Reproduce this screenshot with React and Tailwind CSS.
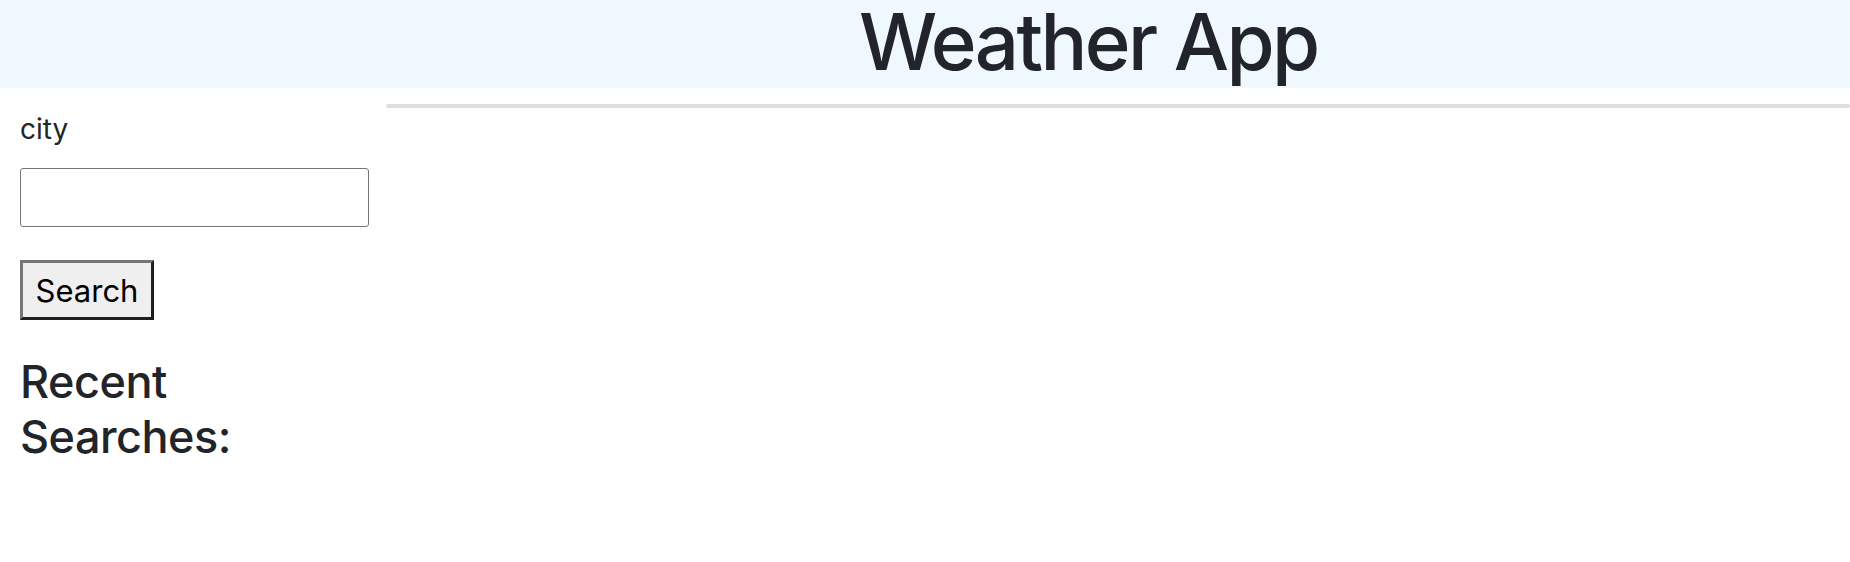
export default function App() {
  return (
    <div className="min-h-[562px] bg-white text-[#212529]" style={{ fontFamily: "Inter, 'Liberation Sans', sans-serif" }}>
      <header className="h-[88px] bg-[#f0f8ff] pl-[859px]">
        <h1 className="text-[78px] leading-[84px] font-medium tracking-[-2.6px] whitespace-nowrap">Weather App</h1>
      </header>
      <div className="flex">
        <aside className="w-[386px] shrink-0 pl-[20px]">
          <label className="block mt-[24px] text-[28px] leading-[34px]">city</label>
          <input type="text" className="block mt-[22px] w-[349px] h-[59px] border border-[#767676] rounded-[3px] bg-white" />
          <button className="block mt-[33px] w-[134px] h-[60px] bg-[#efefef] border-[3px] border-t-[#767676] border-l-[#767676] border-b-[#1f1f1f] border-r-[#1f1f1f] text-black text-[31px] leading-none">Search</button>
          <h2 className="mt-[34px] w-[300px] text-[45px] leading-[55px] font-medium tracking-[-0.5px]">Recent Searches:</h2>
        </aside>
        <main className="flex-1">
          <div className="mt-[16px] h-[4px] rounded-full bg-[#dedede]" />
        </main>
      </div>
    </div>
  );
}
